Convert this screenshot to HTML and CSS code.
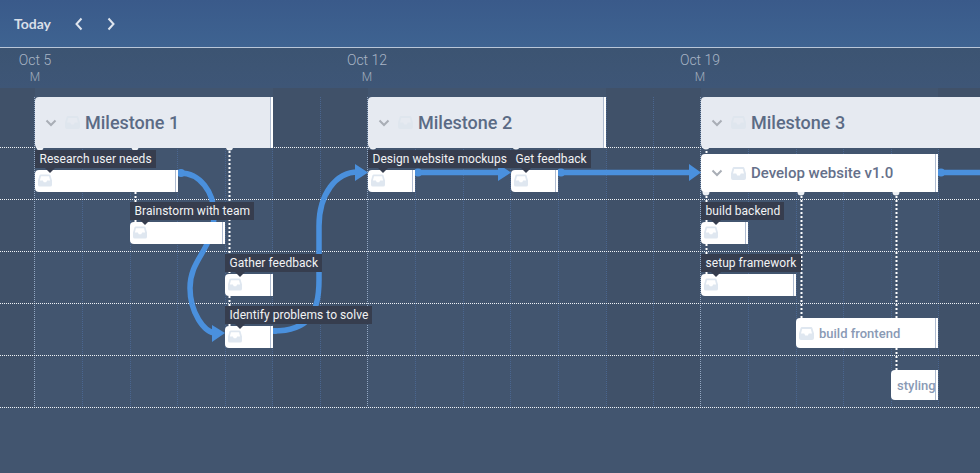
FILE: index.html
```html
<!DOCTYPE html>
<html lang="en">
<head>
<meta charset="utf-8">
<title>Timeline</title>
<link rel="stylesheet" href="styles.css">
</head>
<body>
<svg class="defs" width="0" height="0" aria-hidden="true">
  <symbol id="inbox" viewBox="0 0 15 13">
    <path d="M3 0h9a1.500 1.500 0 0 1 1.400 1L15 6.500V11a2 2 0 0 1-2 2H2a2 2 0 0 1-2-2V6.500L1.600 1A1.500 1.500 0 0 1 3 0zM3.200 2 2 6.500h3.200L6.200 8.500h2.600l1-2H13L11.800 2z" fill-rule="evenodd"/>
  </symbol>
  <symbol id="chev" viewBox="0 0 12 8">
    <path d="M1.500 1.500 6 6l4.500-4.500" fill="none" stroke="currentColor" stroke-width="2"/>
  </symbol>
</svg>
<header class="topbar">
  <span class="today">Today</span>
  <svg class="nav" viewBox="0 0 10 14"><path d="M7.500 1.500 2.500 7l5 5.500"/></svg>
  <svg class="nav" viewBox="0 0 10 14"><path d="M2.500 1.500 7.500 7l-5 5.500"/></svg>
</header>
<div class="dates">
  <div class="date d1"><span class="day">Oct 5</span><span class="wk">M</span></div>
  <div class="date d2"><span class="day">Oct 12</span><span class="wk">M</span></div>
  <div class="date d3"><span class="day">Oct 19</span><span class="wk">M</span></div>
</div>
<main class="canvas">
  <div class="weekend w1"></div><div class="weekend w2"></div><div class="weekend w3"></div><div class="weekend w4"></div>

  <svg class="lines" width="980" height="385" viewBox="0 88 980 385">
    <g class="vgrid">
      <path d="M82.500 97V407M130.500 97V407M177.500 97V407M225.500 97V407M272.500 97V407M320.500 97V407M415.500 97V407M463.500 97V407M510.500 97V407M558.500 97V407M606.500 97V407M653.500 97V407M748.500 97V407M796.500 97V407M843.500 97V407M891.500 97V407M938.500 97V407"/>
    </g>
    <g class="vmain">
      <path d="M34.500 97V407M367.500 97V407M700.500 97V407"/>
    </g>
    <g class="hgrid">
      <path d="M0 147.500H980M0 199.500H980M0 251.500H980M0 303.500H980M0 355.500H980M0 407.500H980"/>
    </g>
    <g class="deps">
      <path d="M229.500 147V274M229.500 296V326M135.500 192V222M706.500 192V274M801.500 192V318M896.500 192V370M706.500 147V154"/>
    </g>
    <g class="links">
      <path d="M180 173C200 173 214 192 214 214C214 250 190 258 190 288C190 312 204 333 216 333"/>
      <path d="M273 331C310 331 319 312 319 280V226C319 194 336 172 358 172"/>
      <path d="M415 172.500H502M558 172.500H692M937 172.500H980"/>
    </g>
    <g class="heads">
      <path d="M212 325 225 333 212 342zM355 164 368 172.500 355 181zM498 164 511 172.500 498 181zM689 164 701 172.500 689 181z"/>
      <circle cx="181" cy="173" r="4"/><circle cx="418" cy="172.500" r="4"/><circle cx="561" cy="172.500" r="4"/><circle cx="941" cy="172.500" r="4"/><circle cx="275" cy="331" r="3"/>
    </g>
    <g class="pins">
      <circle cx="40" cy="147" r="3.500"/><circle cx="135" cy="147" r="3.500"/><circle cx="229.500" cy="147" r="3.500"/>
      <circle cx="373" cy="146" r="3.500"/><circle cx="516" cy="146" r="3.500"/><circle cx="706" cy="146" r="3.500"/>
      <circle cx="706" cy="192" r="3.500"/><circle cx="801" cy="192" r="3.500"/><circle cx="896" cy="192" r="3.500"/>
    </g>
  </svg>

  <div class="bar milestone m1"><svg class="chev"><use href="#chev"/></svg><svg class="ico"><use href="#inbox"/></svg><span>Milestone 1</span></div>
  <div class="bar milestone m2"><svg class="chev"><use href="#chev"/></svg><svg class="ico"><use href="#inbox"/></svg><span>Milestone 2</span></div>
  <div class="bar milestone m3"><svg class="chev"><use href="#chev"/></svg><svg class="ico"><use href="#inbox"/></svg><span>Milestone 3</span></div>

  <div class="bar parent"><svg class="chev"><use href="#chev"/></svg><svg class="ico"><use href="#inbox"/></svg><span>Develop website v1.0</span></div>

  <div class="bar task t1"><svg class="ico"><use href="#inbox"/></svg></div>
  <div class="bar task t2"><svg class="ico"><use href="#inbox"/></svg></div>
  <div class="bar task t3"><svg class="ico"><use href="#inbox"/></svg></div>
  <div class="bar task t4"><svg class="ico"><use href="#inbox"/></svg></div>
  <div class="bar task t5"><svg class="ico"><use href="#inbox"/></svg></div>
  <div class="bar task t6"><svg class="ico"><use href="#inbox"/></svg></div>
  <div class="bar task t7"><svg class="ico"><use href="#inbox"/></svg></div>
  <div class="bar task t8"><svg class="ico"><use href="#inbox"/></svg></div>

  <div class="bar open frontend"><svg class="ico"><use href="#inbox"/></svg><span>build frontend</span></div>
  <div class="bar open styling"><span>styling</span></div>

  <div class="tip t1">Research user needs</div>
  <div class="tip t2">Brainstorm with team</div>
  <div class="tip t3">Gather feedback</div>
  <div class="tip t4">Identify problems to solve</div>
  <div class="tip t5">Design website mockups</div>
  <div class="tip t6">Get feedback</div>
  <div class="tip t7">build backend</div>
  <div class="tip t8">setup framework</div>
</main>
</body>
</html>
```
FILE: styles.css
```css
* { box-sizing: border-box; }
html, body { margin: 0; height: 473px; overflow: hidden; }
body { background: #42556f; font-family: Roboto, "Liberation Sans", sans-serif; }
.defs { position: absolute; }

.topbar {
  height: 48px;
  display: flex;
  align-items: center;
  padding-left: 14px;
  background: linear-gradient(#3a5a8a, #3e6391);
  border-bottom: 1px solid #b9c6d8;
}
.today { font: 700 14px Lato, sans-serif; color: #d9dfe8; margin-right: 23px; }
.nav { width: 10px; height: 14px; margin-right: 22px; }
.nav path { fill: none; stroke: #dfe5ee; stroke-width: 2; }

.dates {
  height: 40px;
  position: relative;
  background: linear-gradient(#3c5472, #3e5677);
}
.date {
  position: absolute;
  top: 4px;
  width: 60px;
  margin-left: -30px;
  display: flex;
  flex-direction: column;
  align-items: center;
  color: #a9b5c6;
  font-weight: 300;
}
.d1 { left: 35px; }
.d2 { left: 367px; }
.d3 { left: 700px; }
.day { font-size: 14px; line-height: 17px; }
.wk { font-size: 12px; line-height: 16px; color: #a2adbc; }

.canvas { position: relative; height: 385px; }
.weekend { position: absolute; top: 0; height: 319px; background: #405169; }
.w1 { left: 0; width: 35px; }
.w2 { left: 273px; width: 95px; }
.w3 { left: 606px; width: 95px; }
.w4 { left: 938px; width: 42px; }

.lines { position: absolute; left: 0; top: 0; }
.vgrid path { stroke: #4a6690; stroke-width: 1; stroke-dasharray: 1 1; fill: none; }
.vmain path { stroke: #93a8c4; stroke-width: 1; stroke-dasharray: 1 1; fill: none; }
.hgrid path { stroke: #f1f4f8; stroke-width: 1; stroke-dasharray: 1 1; fill: none; }
.deps path { stroke: #fff; stroke-width: 2; stroke-dasharray: 2 2; fill: none; }
.links path { stroke: #4a90dd; stroke-width: 5.500; fill: none; }
.heads path, .heads circle { fill: #4a90dd; }
.pins circle { fill: #eef1f5; }

.bar {
  position: absolute;
  display: flex;
  align-items: center;
  border-radius: 4px 0 0 4px;
  border-right: 2px solid #fff;
  box-shadow: inset -1px 0 0 #aebbd0;
  background: #fff;
}
.milestone {
  top: 9px;
  height: 51px;
  padding-left: 10px;
  width: 238px;
  background: #e6eaf1;
  color: #5b6b85;
  font-size: 18px;
  font-weight: 500;
}
.m1 { left: 35px; }
.m2 { left: 368px; }
.m3 { left: 701px; width: 290px; }
.chev { width: 12px; height: 8px; color: #a9aeb6; margin-right: 8px; flex: none; }
.ico { width: 15px; height: 13px; fill: #dfe7f0; margin-right: 5px; flex: none; }
.milestone .ico { fill: #dfe6ee; }

.parent {
  left: 701px;
  top: 66px;
  width: 237px;
  height: 38px;
  padding-left: 10px;
  color: #65708a;
  font-size: 15px;
  font-weight: 500;
}
.task { height: 22px; padding: 4px 0 0 3px; align-items: flex-start; }
.task .ico { width: 14px; height: 13px; }
.task.t1 { left: 35px; top: 82px; width: 143px; }
.task.t2 { left: 130px; top: 134px; width: 95px; }
.task.t3 { left: 225px; top: 186px; width: 48px; }
.task.t4 { left: 225px; top: 238px; width: 48px; }
.task.t5 { left: 368px; top: 82px; width: 47px; }
.task.t6 { left: 511px; top: 82px; width: 47px; }
.task.t7 { left: 701px; top: 134px; width: 47px; }
.task.t8 { left: 701px; top: 186px; width: 95px; }

.open { color: #8a9ab5; font-size: 13px; font-weight: 500; height: 30px; overflow: hidden; white-space: nowrap; }
.frontend { left: 796px; top: 230px; width: 142px; padding-left: 3px; }
.styling { left: 891px; top: 282px; width: 47px; padding-left: 6px; }

.tip {
  position: absolute;
  height: 18px;
  padding: 0 4px 0 4.500px;
  background: #363d4e;
  color: #f2f3f5;
  font-size: 12px;
  line-height: 18px;
  letter-spacing: .05px;
  white-space: nowrap;
}
.tip::after {
  content: "";
  position: absolute;
  left: 10px;
  top: 18px;
  border: 5px solid transparent;
  border-top-color: #363d4e;
  border-bottom-width: 0;
}
.tip.t1 { left: 35px; top: 62px; }
.tip.t2 { left: 130px; top: 114px; }
.tip.t3 { left: 225px; top: 166px; }
.tip.t4 { left: 225px; top: 218px; }
.tip.t5 { left: 368px; top: 62px; }
.tip.t6 { left: 511px; top: 62px; }
.tip.t7 { left: 701px; top: 114px; }
.tip.t8 { left: 701px; top: 166px; }
```
